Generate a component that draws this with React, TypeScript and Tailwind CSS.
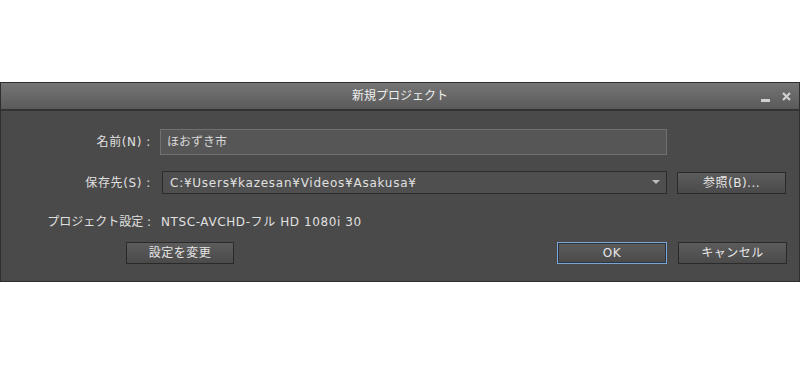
import React from "react";

const font = { fontFamily: '"DejaVu Sans", "Noto Sans CJK JP", sans-serif' };

function Btn({ children, primary = false, w = "w-[110px]" }: { children: React.ReactNode; primary?: boolean; w?: string }) {
  return (
    <div
      className={`${w} h-[22px] flex items-center justify-center text-[12px] tracking-[0.5px] text-[#e6e6e6] bg-gradient-to-b from-[#5c5c5c] to-[#4a4a4a] border ${
        primary ? "border-[#7aa6d4] shadow-[inset_0_0_0_1px_#2b3440]" : "border-[#2a2a2a]"
      }`}
    >
      {children}
    </div>
  );
}

export default function App() {
  return (
    <div className="w-[800px] h-[366px] bg-white flex flex-col" style={font}>
      <div className="mt-[82px] w-[800px] h-[200px] flex flex-col border border-[#2e2e2e] bg-[#4a4a4a]">
        <div className="h-[28px] flex items-center bg-gradient-to-b from-[#757575] to-[#5a5a5a] relative border-b-2 border-[#333]">
          <div className="flex-1 text-center text-[12px] text-[#eeeeee]">新規プロジェクト</div>
          <div className="absolute right-[8px] top-0 h-full flex items-center gap-[12px] text-[#cfcfcf]">
            <div className="w-[9px] h-[3px] bg-[#d0d0d0] mt-[8px]" />
            <svg width="9" height="9" viewBox="0 0 9 9">
              <path d="M1 1 L8 8 M8 1 L1 8" stroke="#d0d0d0" strokeWidth="2.2" />
            </svg>
          </div>
        </div>
        <div className="flex flex-col pt-[18px] text-[12px] text-[#e0e0e0]">
          <div className="flex items-center h-[26px]">
            <div className="w-[152px] text-right pr-[2px] tracking-[0.6px]">名前(N) :</div>
            <div className="ml-[7px] w-[507px] h-[26px] bg-[#565656] border border-[#707070] flex items-center pl-[6px] text-[#d8d8d8]">
              ほおずき市
            </div>
          </div>
          <div className="flex items-center h-[23px] mt-[16px]">
            <div className="w-[152px] text-right pr-[2px] tracking-[0.6px]">保存先(S) :</div>
            <div className="ml-[9px] w-[505px] h-[23px] bg-[#4f4f4f] border border-[#2c2c2c] flex items-center pl-[7px] pr-[6px]">
              <span className="flex-1 tracking-[0.75px]">C:¥Users¥kazesan¥Videos¥Asakusa¥</span>
              <svg width="8" height="5" viewBox="0 0 8 5">
                <path d="M0 0 L8 0 L4 4 Z" fill="#bdbdbd" />
              </svg>
            </div>
            <div className="ml-[10px]">
              <Btn w="w-[109px]">参照(B)...</Btn>
            </div>
          </div>
          <div className="flex items-center h-[20px] mt-[18px]">
            <div className="w-[152px] text-right pr-[2px]">プロジェクト設定 :</div>
            <div className="ml-[8px] tracking-[0.6px]">NTSC-AVCHD-フル HD 1080i 30</div>
          </div>
          <div className="flex items-center h-[22px] mt-[10px]">
            <div className="ml-[125px]">
              <Btn w="w-[108px]">設定を変更</Btn>
            </div>
            <div className="ml-[323px]">
              <Btn primary>OK</Btn>
            </div>
            <div className="ml-[11px]">
              <Btn w="w-[109px]">キャンセル</Btn>
            </div>
          </div>
        </div>
      </div>
    </div>
  );
}
